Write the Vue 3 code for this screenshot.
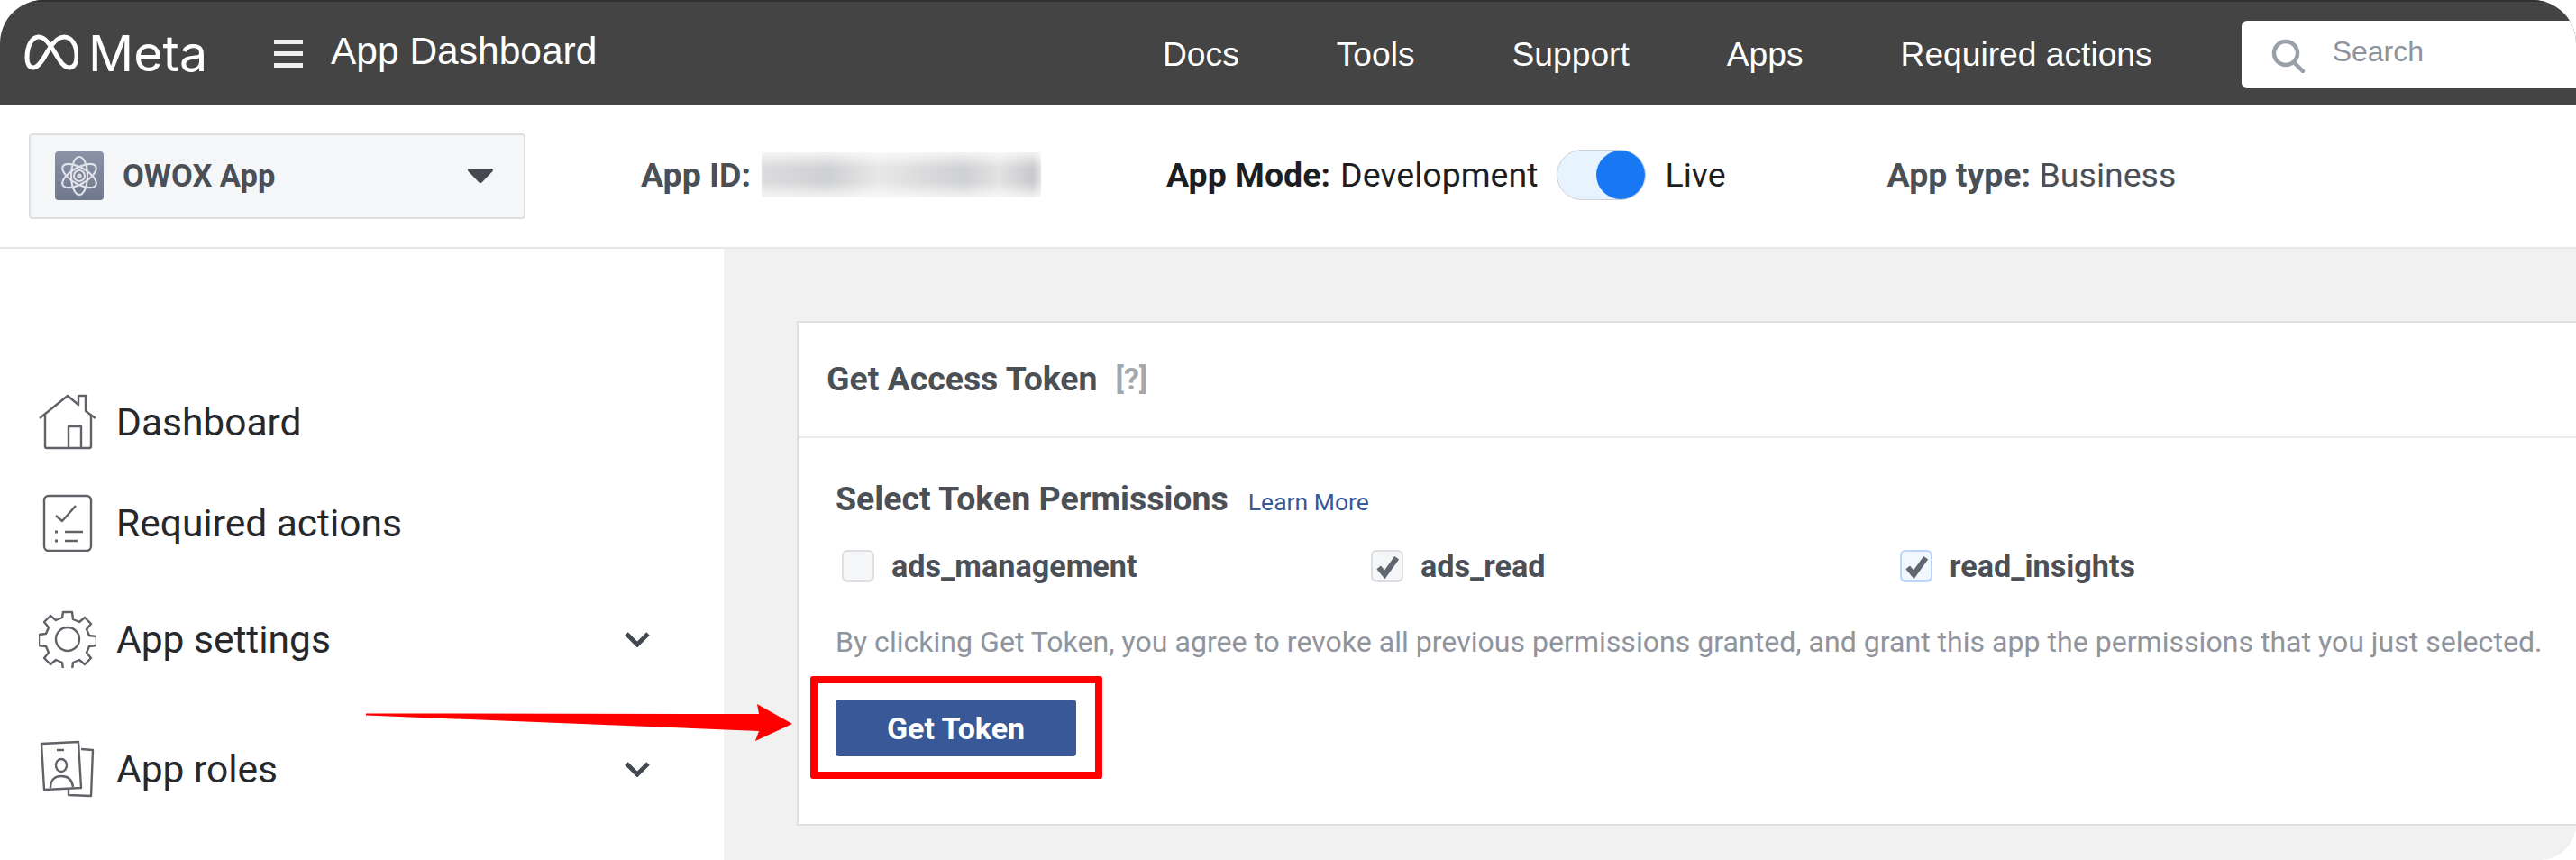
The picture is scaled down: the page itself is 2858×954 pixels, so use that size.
<template>
  <div class="page">
    <header class="topbar">
      <svg class="meta-mark" viewBox="0 0 60 40" fill="none" stroke="#fff" stroke-width="5">
        <path d="M3 26C3 12 9 3 16 3c8 0 14 11 22 24 4 7 8 10 12 10 5 0 8-5 8-13C58 11 52 3 44 3c-7 0-12 6-17 14-5 9-11 20-17 20-5 0-7-5-7-11z" />
      </svg>
      <span class="meta-word">Meta</span>
      <div class="burger"><i></i><i></i><i></i></div>
      <span class="app-title">App Dashboard</span>
      <nav class="topnav">
        <a v-for="link in navLinks" :key="link">{{ link }}</a>
      </nav>
      <div class="search">
        <svg class="search-icon" viewBox="0 0 38 38" fill="none" stroke="#9aa0aa" stroke-width="4.5">
          <circle cx="16" cy="16" r="13" />
          <path d="M25 26l10 10" stroke-linecap="round" />
        </svg>
        <span>Search</span>
      </div>
    </header>

    <section class="appbar">
      <div class="app-select">
        <div class="app-icon">
          <svg viewBox="0 0 54 54" fill="none" stroke="#dfe2e8" stroke-width="2.2">
            <ellipse cx="27" cy="27" rx="9" ry="21" />
            <ellipse cx="27" cy="27" rx="9" ry="21" transform="rotate(60 27 27)" />
            <ellipse cx="27" cy="27" rx="9" ry="21" transform="rotate(120 27 27)" />
            <circle cx="27" cy="27" r="6" />
            <circle cx="27" cy="27" r="1.5" />
          </svg>
        </div>
        <span class="app-name">OWOX App</span>
        <svg class="caret" viewBox="0 0 28 16"><path d="M2 0h24c2 0 2.500 1.500 1.500 3L16 15c-1 1.300-3 1.300-4 0L.5 3C-.5 1.500 0 0 2 0z" fill="#444950" /></svg>
      </div>
      <div class="app-id"><b>App ID:</b><div class="blurred"></div></div>
      <div class="app-mode">
        <b>App Mode:</b> <span>Development</span>
        <div class="toggle"><i></i></div>
        <span>Live</span>
      </div>
      <div class="app-type"><b>App type:</b> <span>Business</span></div>
    </section>

    <div class="main">
      <aside class="sidebar">
        <div v-for="item in menu" :key="item.label" class="menu-item">
          <svg class="menu-icon" viewBox="0 0 64 64" fill="none" stroke="#5f6267" stroke-width="2.4" stroke-linejoin="round">
            <template v-if="item.icon === 'home'">
              <path d="M1 28L32 3l12 10V3h8v17l11 8" />
              <path d="M7 24v35c0 1 1 2 2 2h47c1 0 2-1 2-2V24" />
              <path d="M33 61V37h14v24" />
            </template>
            <template v-else-if="item.icon === 'check'">
              <rect x="6" y="2" width="52" height="61" rx="5" />
              <path d="M19 24l7 6 15-17" />
              <path d="M29 42h20M29 52h14" />
              <path d="M18 42h3M18 52h3" stroke-width="3" />
            </template>
            <template v-else-if="item.icon === 'gear'">
              <path d="M27 2h10l1 8 7 3 6-5 7 7-5 6 3 7 8 1v10l-8 1-3 7 5 6-7 7-6-5-7 3-1 8H27l-1-8-7-3-6 5-7-7 5-6-3-7-8-1V27l8-1 3-7-5-6 7-7 6 5 7-3z" />
              <circle cx="32" cy="32" r="13" />
            </template>
            <template v-else>
              <path d="M3 4l41-2 3 51-41 2z" />
              <path d="M47 10l13 1-2 51-25-1v-6" />
              <path d="M20 11h8" />
              <ellipse cx="25" cy="28" rx="6" ry="7" />
              <path d="M13 53c0-9 5-13 12-13s12 4 13 12" />
            </template>
          </svg>
          <span class="menu-label">{{ item.label }}</span>
          <svg v-if="item.more" class="chevron" viewBox="0 0 28 18" fill="none" stroke="#444950" stroke-width="5"><path d="M2 3l12 12L26 3" /></svg>
        </div>
      </aside>

      <main class="content">
        <div class="card">
          <div class="card-head">
            <h2>Get Access Token</h2>
            <span class="hint">[?]</span>
          </div>
          <div class="card-body">
            <div class="perm-title">
              <h3>Select Token Permissions</h3>
              <a>Learn More</a>
            </div>
            <div class="perms">
              <label v-for="perm in permissions" :key="perm.name" class="perm" :class="perm.cls">
                <span class="box">
                  <svg v-if="perm.checked" viewBox="0 0 24 24" fill="none" stroke="#606770" stroke-width="4.500"><path d="M5 13l5 6L20 5" /></svg>
                </span>
                <span class="perm-name">{{ perm.name }}</span>
              </label>
            </div>
            <p class="notice">By clicking Get Token, you agree to revoke all previous permissions granted, and grant this app the permissions that you just selected.</p>
            <button class="token-btn">Get Token</button>
          </div>
        </div>
      </main>
    </div>

    <!-- красная разметка поверх скриншота -->
    <div class="mark-box"></div>
    <svg class="mark-arrow" viewBox="0 0 480 52">
      <path d="M2 15.500L438 16 436 5 475 27 434 46 438 35 2 17.500z" fill="#ff0000" />
    </svg>
  </div>
</template>

<script setup>
const navLinks = ['Docs', 'Tools', 'Support', 'Apps', 'Required actions'];

const menu = [
  { label: 'Dashboard', icon: 'home' },
  { label: 'Required actions', icon: 'check' },
  { label: 'App settings', icon: 'gear', more: true },
  { label: 'App roles', icon: 'roles', more: true },
];

const permissions = [
  { name: 'ads_management', checked: false, cls: 'perm-a' },
  { name: 'ads_read', checked: true, cls: 'perm-b' },
  { name: 'read_insights', checked: true, cls: 'perm-c' },
];
</script>

<style>
html,
body {
  margin: 0;
  background: #fff;
}
</style>

<style scoped>
.page {
  position: relative;
  width: 2858px;
  height: 954px;
  display: flex;
  flex-direction: column;
  overflow: hidden;
  border-radius: 48px 48px 40px 0;
  background: #fff;
  font-family: Roboto, "Liberation Sans", sans-serif;
  color: #4b4f56;
}

.topbar {
  height: 116px;
  flex: none;
  box-sizing: border-box;
  display: flex;
  align-items: center;
  padding-left: 27px;
  background: #444;
  border-top: 2px solid #303030;
  color: #fff;
  font-family: "Liberation Sans", Arial, sans-serif;
}

.meta-mark {
  width: 60px;
  height: 40px;
  margin-top: -2px;
}

.meta-word {
  width: 129px;
  margin-left: 11px;
  font-family: Inter, sans-serif;
  font-size: 55.500px;
  line-height: 40px;
}

.burger {
  width: 32px;
  margin-left: 77px;
  display: flex;
  flex-direction: column;
  gap: 8px;
}

.burger i {
  height: 5px;
  background: #f0f0f0;
}

.app-title {
  width: 296px;
  margin-left: 31px;
  font-size: 42.500px;
  margin-top: -4px;
  white-space: nowrap;
}

.topnav {
  margin-left: 627px;
  margin-top: 2px;
  display: flex;
  gap: 108px;
  font-size: 37.200px;
}

.search {
  flex: 1;
  height: 75px;
  margin: 3px 0 0 99px;
  display: flex;
  align-items: center;
  background: #fff;
  border-radius: 6px 0 0 6px;
  color: #8d949e;
  font-size: 32px;
}

.search-icon {
  width: 38px;
  height: 38px;
  margin: 2px 30px 0 33px;
}

.search span {
  margin-top: -6px;
}

.appbar {
  height: 160px;
  flex: none;
  box-sizing: border-box;
  display: flex;
  align-items: center;
  padding-left: 32px;
  border-bottom: 2px solid #e6e7ea;
  font-size: 37.500px;
}

.appbar b {
  font-weight: 700;
}

.app-select {
  width: 551px;
  height: 95px;
  box-sizing: border-box;
  display: flex;
  align-items: center;
  padding-left: 27px;
  background: #f5f6f7;
  border: 2px solid #dddfe2;
  border-radius: 4px;
}

.app-icon {
  width: 54px;
  height: 54px;
  border-radius: 4px;
  background: linear-gradient(#8a93a6, #6f788c);
}

.app-icon svg {
  display: block;
}

.app-name {
  margin-left: 21px;
  font-size: 34.500px;
  font-weight: 700;
}

.caret {
  width: 28px;
  height: 16px;
  margin-left: auto;
  margin-right: 34px;
}

.app-id {
  margin: -3px 0 0 128px;
  display: flex;
  align-items: center;
  gap: 12px;
}

.blurred {
  width: 310px;
  height: 50px;
  background:
    linear-gradient(180deg, rgba(255, 255, 255, 0.75), rgba(255, 255, 255, 0) 35%, rgba(255, 255, 255, 0) 65%, rgba(255, 255, 255, 0.75)),
    linear-gradient(90deg, #dcdcde 0%, #cfd0d2 24%, #e8e8e9 42%, #cfd0d2 72%, #e2e2e3 85%, #c8c9cb 97%, #e4e4e5 100%);
}

.app-mode {
  margin: -3px 0 0 139px;
  display: flex;
  align-items: center;
  color: #1c1e21;
}

.app-mode b {
  margin-right: 11px;
}

.toggle {
  width: 99px;
  height: 56px;
  box-sizing: border-box;
  margin: 0 21px;
  display: flex;
  justify-content: flex-end;
  background: #e7f3ff;
  border: 1px solid #ccd0d5;
  border-radius: 28px;
}

.toggle i {
  width: 54px;
  height: 54px;
  border-radius: 50%;
  background: #1877f2;
}

.app-type {
  margin: -3px 0 0 179px;
}

.main {
  flex: 1;
  display: flex;
  min-height: 0;
}

.sidebar {
  width: 803px;
  flex: none;
  box-sizing: border-box;
  padding: 160px 82px 0 43px;
  color: #26282c;
}

.menu-item {
  height: 64px;
  display: flex;
  align-items: center;
}

.menu-item:nth-child(2) {
  margin-top: 48px;
}

.menu-item:nth-child(3) {
  margin-top: 65px;
}

.menu-item:nth-child(4) {
  margin-top: 80px;
}

.menu-icon {
  width: 64px;
  height: 64px;
  flex: none;
}

.menu-label {
  margin-left: 22px;
  font-size: 42.500px;
}

.chevron {
  width: 28px;
  height: 18px;
  margin-left: auto;
}

.content {
  flex: 1;
  padding: 80px 0 0 81px;
  background: #f1f1f1;
}

.card {
  height: 560px;
  box-sizing: border-box;
  background: #fff;
  border: 2px solid #dddfe2;
  border-right: 0;
}

.card-head {
  height: 128px;
  box-sizing: border-box;
  display: flex;
  align-items: center;
  padding: 0 0 3px 31px;
  border-bottom: 2px solid #e9ebee;
}

.card-head h2 {
  margin: 0;
  font-size: 37.400px;
  font-weight: 700;
}

.hint {
  margin-left: 20px;
  color: #a5a7aa;
  font-size: 34px;
  font-weight: 700;
}

.card-body {
  padding: 46px 0 0 41px;
}

.perm-title {
  display: flex;
  align-items: baseline;
  gap: 22px;
}

.perm-title h3 {
  margin: 0;
  font-size: 37.500px;
  font-weight: 700;
  line-height: 42px;
}

.perm-title a {
  color: #385898;
  font-size: 26.500px;
}

.perms {
  margin-top: 35px;
  display: flex;
  height: 38px;
}

.perm {
  display: flex;
  align-items: center;
  font-size: 34.200px;
  font-weight: 700;
}

.perm-a {
  width: 587px;
  padding-left: 7px;
}

.perm-b {
  width: 587px;
}

.box {
  width: 36px;
  height: 36px;
  box-sizing: border-box;
  margin-right: 19px;
  background: #f5f6f7;
  border: 2px solid #dddfe2;
  border-bottom-width: 3px;
  border-radius: 6px;
}

.perm-c .box {
  background: #f2f6fd;
  border-color: #bdd4fb;
}

.box svg {
  display: block;
}

.notice {
  margin: 46px 0 0;
  color: #90949c;
  font-size: 32.100px;
  line-height: 38px;
}

.token-btn {
  display: block;
  width: 267px;
  height: 63px;
  margin-top: 45px;
  padding: 0;
  background: #385898;
  border: 0;
  border-radius: 4px;
  color: #fff;
  font-family: inherit;
  font-size: 34px;
  font-weight: 700;
}

.mark-box {
  position: absolute;
  left: 899px;
  top: 750px;
  width: 324px;
  height: 114px;
  box-sizing: border-box;
  border: 8px solid #ff0000;
  border-radius: 3px;
}

.mark-arrow {
  position: absolute;
  left: 404px;
  top: 776px;
  width: 480px;
  height: 52px;
}
</style>
